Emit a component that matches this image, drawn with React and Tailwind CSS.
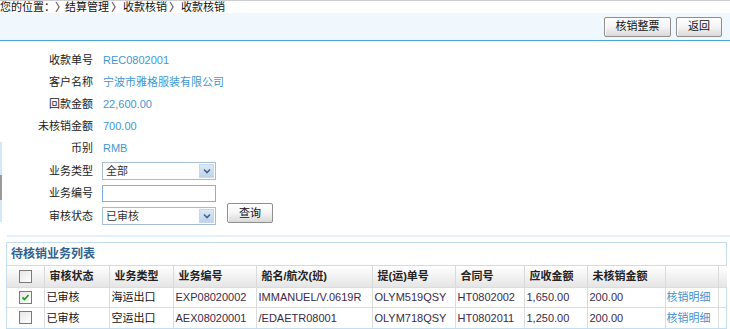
import React from 'react'

const font = "font-['Liberation_Sans','Noto_Sans_CJK_SC',sans-serif]"

function Btn({ children, className = '' }) {
  return (
    <div
      className={`flex items-center justify-center h-[20px] border border-[#8f8f8f] rounded-[2px] bg-gradient-to-b from-[#ffffff] via-[#f4f4f4] to-[#d9d9d9] shadow-[inset_1px_1px_0_#fff] text-[11px] text-[#111] ${className}`}
    >
      {children}
    </div>
  )
}

function Select({ value }) {
  return (
    <div className="flex items-center w-[114px] h-[18px] border border-[#a5bcd2] bg-white">
      <span className="flex-1 pl-[3px] text-[11px] leading-none text-[#333]">{value}</span>
      <span className="flex items-center justify-center w-[15px] h-[14px] mr-[1px] bg-gradient-to-b from-[#dbe9f7] to-[#bcd3ec] border border-[#c5d8ee]">
        <svg width="8" height="6" viewBox="0 0 8 6">
          <path d="M1 1.5l3 3 3-3" stroke="#4d6185" strokeWidth="1.6" fill="none" />
        </svg>
      </span>
    </div>
  )
}

function Checkbox({ checked }) {
  return (
    <span className="flex items-center justify-center w-[13px] h-[13px] border border-[#7a7a7a] bg-gradient-to-br from-[#e6e6e6] to-[#ffffff]">
      {checked && (
        <svg width="9" height="9" viewBox="0 0 9 9">
          <path d="M1.5 4.5l2 2 4-4.5" stroke="#22a022" strokeWidth="1.8" fill="none" />
        </svg>
      )}
    </span>
  )
}

const infoRows = [
  ['收款单号', 'REC0802001'],
  ['客户名称', '宁波市雅格服装有限公司'],
  ['回款金额', '22,600.00'],
  ['未核销金额', '700.00'],
  ['币别', 'RMB'],
]

const cols = [
  'w-[37px]', 'w-[65px]', 'w-[64px]', 'w-[83px]', 'w-[116px]', 'w-[83px]',
  'w-[69px]', 'w-[63px]', 'w-[78px]', 'w-[53px]', 'w-[9px]',
]

const headers = ['', '审核状态', '业务类型', '业务编号', '船名/航次(班)', '提(运)单号', '合同号', '应收金额', '未核销金额', '', '']

const rows = [
  { checked: true, data: ['已审核', '海运出口', 'EXP08020002', 'IMMANUEL/V.0619R', 'OLYM519QSY', 'HT0802002', '1,650.00', '200.00'] },
  { checked: false, data: ['已审核', '空运出口', 'AEX08020001', '/EDAETR08001', 'OLYM718QSY', 'HT0802011', '1,250.00', '200.00'] },
]

export default function App() {
  return (
    <div className={`relative w-[730px] h-[329px] bg-white overflow-hidden text-[11px] ${font}`}>
      {/* breadcrumb */}
      <div className="flex items-center h-[13px] border-t border-[#cfcfcf] leading-none text-[#111] whitespace-nowrap">
        <span>您的位置：</span>
        <span className="-mr-[1px]">〉</span>
        <span>结算管理</span>
        <span className="ml-[2px] mr-[1px]">〉</span>
        <span>收款核销</span>
        <span className="ml-[2px] mr-[1px]">〉</span>
        <span>收款核销</span>
      </div>

      {/* toolbar */}
      <div className="flex items-center justify-end gap-[5px] h-[28px] pr-[8px] bg-[#f1f8fd] border-b border-[#4aa5d7]">
        <Btn className="w-[67px]">核销整票</Btn>
        <Btn className="w-[46px]">返回</Btn>
      </div>

      {/* form */}
      <div className="pt-[8px]">
        {infoRows.map(([label, value]) => (
          <div key={label} className="flex items-center h-[22px]">
            <span className="w-[93px] text-right text-[#222]">{label}</span>
            <span className="ml-[10px] text-[#3f97d2]">{value}</span>
          </div>
        ))}
        <div className="flex items-center h-[22px] mt-[1px]">
          <span className="w-[93px] text-right text-[#222]">业务类型</span>
          <div className="ml-[9px]">
            <Select value="全部" />
          </div>
        </div>
        <div className="flex items-center h-[22px]">
          <span className="w-[93px] text-right text-[#222]">业务编号</span>
          <div className="ml-[9px] w-[114px] h-[17px] border border-[#7fb2dc] bg-white" />
        </div>
        <div className="flex items-center h-[22px] mt-[1px]">
          <span className="w-[93px] text-right text-[#222]">审核状态</span>
          <div className="ml-[9px]">
            <Select value="已审核" />
          </div>
          <Btn className="w-[46px] ml-[11px] -mt-[6px]">查询</Btn>
        </div>
      </div>

      {/* separator */}
      <div className="ml-[7px] mt-[8px] h-[2px] bg-[#e3f0f9]" />

      {/* list */}
      <div className="ml-[6px] mt-[5px] w-[721px] border border-[#c4ddef]">
        <div className="flex items-center h-[22px] pl-[4px] text-[12px] font-bold text-[#2f6291]">待核销业务列表</div>
        <table className="table-fixed border-collapse w-[719px]">
          <colgroup>
            {cols.map((c, i) => (
              <col key={i} className={c} />
            ))}
          </colgroup>
          <thead>
            <tr className="h-[22px] bg-gradient-to-b from-[#ffffff] to-[#e4e4e4]">
              {headers.map((h, i) => (
                <th
                  key={i}
                  className="border-t border-r border-[#dadada] last:border-r-0 p-0 pl-[5px] text-left font-bold text-[#222] whitespace-nowrap"
                >
                  {i === 0 ? (
                    <span className="flex justify-center -ml-[5px]">
                      <Checkbox />
                    </span>
                  ) : (
                    h
                  )}
                </th>
              ))}
            </tr>
          </thead>
          <tbody>
            {rows.map((r, ri) => (
              <tr key={ri} className="h-[20px]">
                <td className="border-t border-r border-[#dcdcdc] p-0">
                  <span className="flex justify-center">
                    <Checkbox checked={r.checked} />
                  </span>
                </td>
                {r.data.map((d, di) => (
                  <td
                    key={di}
                    className={`border-t border-r border-[#dcdcdc] p-0 pl-[2px] whitespace-nowrap ${di < 2 ? 'text-[#111]' : 'text-[#3a2a4a]'}`}
                  >
                    {d}
                  </td>
                ))}
                <td className="border-t border-r border-[#dcdcdc] p-0 pl-[1px] text-[#3d93d0] whitespace-nowrap">核销明细</td>
                <td className="border-t border-[#dcdcdc] p-0" />
              </tr>
            ))}
          </tbody>
        </table>
      </div>

      {/* splitter handle */}
      <div className="absolute left-0 top-[142px] w-[2px] h-[80px] bg-[#d3e8f6]" />
      <div className="absolute left-0 top-[175px] w-[2px] h-[25px] bg-[#9a9a9a]" />
    </div>
  )
}
